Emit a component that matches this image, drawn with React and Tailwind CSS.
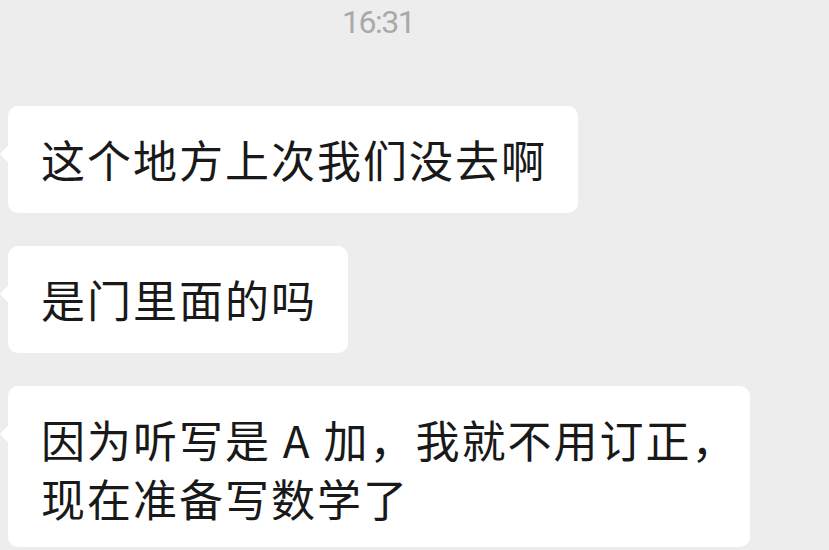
const messages = [
  { id: 1, lines: ['这个地方上次我们没去啊'] },
  { id: 2, lines: ['是门里面的吗'] },
  { id: 3, lines: ['因为听写是 A 加，我就不用订正，', '现在准备写数学了'], width: 'w-[742px]', pad: 'pb-[19px]' },
];

const Bubble = ({ lines, width = 'w-fit', pad = 'pb-[24px]' }) => (
  <div className={`relative bg-white rounded-[10px] pl-[33px] pr-[31px] pt-[24px] ${pad} ${width}`}>
    <div className="absolute left-[-5px] top-[40px] w-[16px] h-[16px] bg-white rotate-45 rounded-[2px]" />
    <div className="relative text-[44px] leading-[59px] tracking-[2px] text-[#191919] whitespace-nowrap">
      {lines.map((line, i) => (
        <div key={i}>{line}</div>
      ))}
    </div>
  </div>
);

const App = () => {
  return (
    <div
      className="w-[829px] h-[550px] overflow-hidden bg-[#ededed]"
      style={{ fontFamily: '"Noto Sans CJK SC", "Noto Sans", sans-serif' }}
    >
      <div className="pl-[342px] pt-[2px] h-[106px]">
        <span className="font-['Roboto',sans-serif] text-[32px] leading-[40px] tracking-[-1.5px] text-[#a9a9a9]">
          16:31
        </span>
      </div>
      <div className="flex flex-col gap-[33px] pl-[8px]">
        {messages.map((m) => (
          <Bubble key={m.id} lines={m.lines} width={m.width} pad={m.pad} />
        ))}
      </div>
    </div>
  );
};

export default App;
